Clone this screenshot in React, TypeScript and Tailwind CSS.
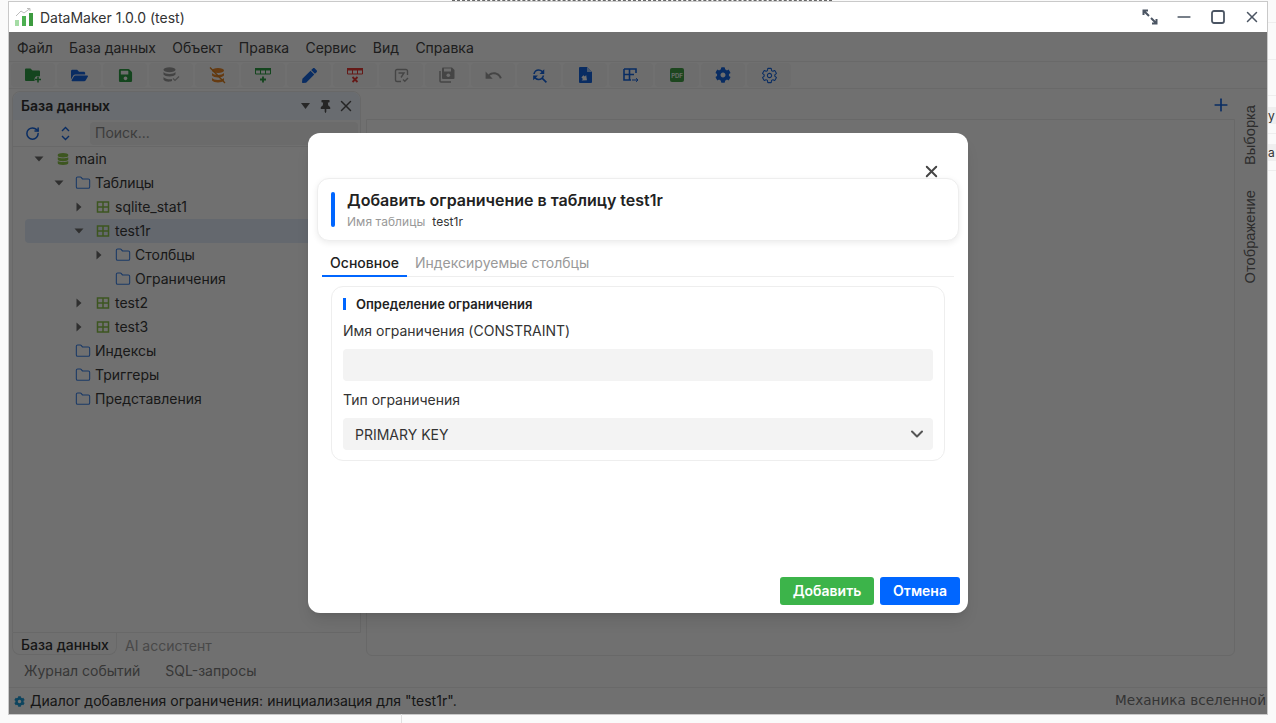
import type { ReactNode } from "react";
import { ChevronDown, Folder, Minus, Plus, RotateCw, X } from "lucide-react";
import { FaCog, FaDatabase, FaFolderOpen, FaPen, FaSave, FaThumbtack } from "react-icons/fa";
import { IoSettingsOutline } from "react-icons/io5";
import { MdFindReplace, MdUndo } from "react-icons/md";

function Logo() {
  return (
    <svg width="19" height="19" viewBox="0 0 19 19">
      <rect x="0" y="12" width="4" height="6" fill="#a5dca5" />
      <rect x="7" y="8" width="4" height="10" fill="#4caf50" />
      <rect x="14" y="5" width="4" height="13" fill="#3d9b40" />
      <path d="M1 8 L6 3 L9 5 L15 0.5 M12 0.5 H15 V3" fill="none" stroke="#bdbdbd" strokeWidth="1" />
    </svg>
  );
}

function ExpandIcon() {
  return (
    <svg width="16" height="16" viewBox="0 0 16 16" fill="none" stroke="#4b5563" strokeWidth="2">
      <path d="M1.5 6 V1.5 H6 M2 2 L7 7 M14.5 10 V14.5 H10 M14 14 L9 9" />
    </svg>
  );
}

function FolderPlusIcon() {
  return (
    <svg width="17" height="15" viewBox="0 0 17 15">
      <path d="M0 1.5 A1 1 0 0 1 1 .5 H5.5 L7.5 2.5 H14 A1 1 0 0 1 15 3.5 V12 A1 1 0 0 1 14 13 H1 A1 1 0 0 1 0 12 Z" fill="#2e9e44" />
      <circle cx="13" cy="11.5" r="3.5" fill="#f8f8f8" />
      <path d="M13 8.5 V14.5 M10 11.5 H16" stroke="#2e9e44" strokeWidth="1.6" />
    </svg>
  );
}

function DbCheckIcon() {
  return (
    <svg width="17" height="16" viewBox="0 0 17 16">
      <ellipse cx="6.5" cy="2.8" rx="6" ry="2.5" fill="#9a9a9a" />
      <path d="M.5 5 C2 7.5 11 7.5 12.5 5 V7.5 C11 10 2 10 .5 7.5 Z" fill="#9a9a9a" />
      <path d="M.5 10 C2 12.5 8 12.5 9 12 V14 C7 15 2 15 .5 12.8 Z" fill="#9a9a9a" />
      <path d="M10 11.5 L12 13.5 L16 9.5" fill="none" stroke="#a8a8a8" strokeWidth="1.2" />
    </svg>
  );
}

function DbOffIcon() {
  return (
    <svg width="17" height="17" viewBox="0 0 17 17">
      <ellipse cx="9" cy="3.5" rx="6" ry="2.5" fill="#e8872a" />
      <path d="M3 6 C5 8.5 13 8.5 15 6 V8.5 C13 11 5 11 3 8.5 Z" fill="#e8872a" />
      <path d="M3 11 C5 13.5 13 13.5 15 11 V13.5 C13 16 5 16 3 13.5 Z" fill="#e8872a" />
      <path d="M1 .5 L16 16" stroke="#d9801f" strokeWidth="1.3" />
    </svg>
  );
}

function TableEditIcon({ color, mark }: { color: string; mark: "plus" | "x" }) {
  return (
    <svg width="16" height="15" viewBox="0 0 16 15">
      <path d="M.5 1.5 H15.5 V6 H.5 Z" fill="none" stroke={color} strokeWidth="1" />
      <rect x="0" y="0" width="16" height="2.5" fill={color} />
      <path d="M5.5 1 V6 M10.5 1 V6" stroke={color} strokeWidth="1" />
      {mark === "plus" ? (
        <path d="M8 8.5 V14.5 M5 11.5 H11" stroke={color} strokeWidth="1.8" />
      ) : (
        <path d="M5.5 9 L10.5 14 M10.5 9 L5.5 14" stroke={color} strokeWidth="1.8" />
      )}
    </svg>
  );
}

function ClipCheckIcon() {
  return (
    <svg width="15" height="15" viewBox="0 0 15 15" fill="none" stroke="#9e9e9e" strokeWidth="1.4">
      <path d="M13.5 7 V3 A1.5 1.5 0 0 0 12 1.5 H3 A1.5 1.5 0 0 0 1.5 3 V12 A1.5 1.5 0 0 0 3 13.5 H7" />
      <path d="M4.5 5 H10 L7 9.5" />
      <path d="M9 11.5 L10.8 13.3 L14 10" />
    </svg>
  );
}

function SaveCopyIcon() {
  return (
    <svg width="16" height="16" viewBox="0 0 16 16">
      <path d="M1 4 V14 A1 1 0 0 0 2 15 H12" fill="none" stroke="#9e9e9e" strokeWidth="1.5" />
      <path d="M4 .5 H13 L15.5 3 V11 A1 1 0 0 1 14.5 12 H4 A1 1 0 0 1 3 11 V1.5 A1 1 0 0 1 4 .5 Z" fill="#9e9e9e" />
      <rect x="5" y="1.5" width="7" height="3" fill="#f8f8f8" />
      <circle cx="9.3" cy="8.2" r="1.8" fill="#f8f8f8" />
    </svg>
  );
}

function FileArrowIcon() {
  return (
    <svg width="13" height="16" viewBox="0 0 13 16">
      <path d="M1 0 H8 L13 5 V15 A1 1 0 0 1 12 16 H1 A1 1 0 0 1 0 15 V1 A1 1 0 0 1 1 0 Z" fill="#1565e0" />
      <path d="M8 0 V5 H13" fill="#a9c9f5" />
      <path d="M9 11.5 L5 8 V10 H3 V13 H5 V15 Z" fill="#fff" transform="rotate(40 6 11)" />
    </svg>
  );
}

function TableArrowIcon() {
  return (
    <svg width="16" height="15" viewBox="0 0 16 15" fill="none" stroke="#1565e0">
      <path d="M1 1 H13 V5 M1 1 V12 H8 M1 6.5 H11 M6.5 1 V12" strokeWidth="1.6" />
      <path d="M9 12 H15 M13 10.2 L15 12 L13 13.8" strokeWidth="1" />
    </svg>
  );
}

function PdfIcon() {
  return (
    <span className="flex h-[14px] w-[14px] items-center justify-center rounded-[2px] bg-[#43a047] text-[6px] font-bold text-[#e8f5e9]">
      PDF
    </span>
  );
}

const toolIcons: ReactNode[] = [
  <FolderPlusIcon />,
  <FaFolderOpen size={17} color="#1565e0" />,
  <FaSave size={15} color="#2e9e44" />,
  <DbCheckIcon />,
  <DbOffIcon />,
  <TableEditIcon color="#2e9e44" mark="plus" />,
  <FaPen size={15} color="#1565e0" />,
  <TableEditIcon color="#e53935" mark="x" />,
  <ClipCheckIcon />,
  <SaveCopyIcon />,
  <MdUndo size={19} color="#9e9e9e" />,
  <MdFindReplace size={19} color="#1565e0" />,
  <FileArrowIcon />,
  <TableArrowIcon />,
  <PdfIcon />,
  <FaCog size={16} color="#1565e0" />,
  <IoSettingsOutline size={17} color="#1565e0" />,
];

function Caret({ open }: { open: boolean }) {
  return (
    <svg width="10" height="10" viewBox="0 0 10 10" fill="#6b6b6b">
      {open ? <path d="M.5 2.5 H9.5 L5 7.5 Z" /> : <path d="M2.5 .5 L7.5 5 L2.5 9.5 Z" />}
    </svg>
  );
}

function TableIcon() {
  return (
    <svg width="14" height="14" viewBox="0 0 14 14" fill="none" stroke="#8bc34a" strokeWidth="1.5">
      <rect x="1.5" y="2" width="11" height="10" />
      <path d="M1.5 7 H12.5 M7 2 V12" />
    </svg>
  );
}

type TreeRow = { label: string; depth: number; kind: "db" | "folder" | "table"; caret?: "open" | "closed"; selected?: boolean };

const rows: TreeRow[] = [
  { label: "main", depth: 0, kind: "db", caret: "open" },
  { label: "Таблицы", depth: 1, kind: "folder", caret: "open" },
  { label: "sqlite_stat1", depth: 2, kind: "table", caret: "closed" },
  { label: "test1r", depth: 2, kind: "table", caret: "open", selected: true },
  { label: "Столбцы", depth: 3, kind: "folder", caret: "closed" },
  { label: "Ограничения", depth: 3, kind: "folder" },
  { label: "test2", depth: 2, kind: "table", caret: "closed" },
  { label: "test3", depth: 2, kind: "table", caret: "closed" },
  { label: "Индексы", depth: 1, kind: "folder" },
  { label: "Триггеры", depth: 1, kind: "folder" },
  { label: "Представления", depth: 1, kind: "folder" },
];

function Tree() {
  return (
    <div className="pl-[12px]">
      {rows.map((r) => (
        <div
          key={r.label}
          className={`flex h-6 items-center text-sm text-[#3a3a3a] ${r.selected ? "rounded-l bg-[#e3edfa]" : ""}`}
          style={{ paddingLeft: 6 + r.depth * 20 }}
        >
          <span className="flex w-4 justify-center">{r.caret && <Caret open={r.caret === "open"} />}</span>
          <span className="ml-2 flex w-4 justify-center">
            {r.kind === "db" && <FaDatabase size={12} color="#8bc34a" />}
            {r.kind === "folder" && <Folder size={16} color="#3b82e8" strokeWidth={1.6} />}
            {r.kind === "table" && <TableIcon />}
          </span>
          <span className="ml-1">{r.label}</span>
        </div>
      ))}
    </div>
  );
}

function DbPanel() {
  return (
    <div className="flex h-[542px] flex-col rounded-t-lg border border-[#ececec]">
      <div className="flex h-[28px] shrink-0 items-center rounded-t-lg bg-[#eef5ff] pl-2 pr-[5px]">
        <span className="flex-1 text-sm font-semibold text-[#333]">База данных</span>
        <svg width="9" height="6" viewBox="0 0 9 6" fill="#5a5a5a"><path d="M0 0 H9 L4.5 6 Z" /></svg>
        <FaThumbtack size={13} color="#555" className="ml-[9px]" />
        <X size={18} color="#555" className="ml-[5px]" strokeWidth={2} />
      </div>
      <div className="flex h-[27px] shrink-0 items-center border-b border-[#ececec] pr-[2px]">
        <RotateCw size={15} color="#1565e0" strokeWidth={2.4} className="ml-[12px]" />
        <svg width="9" height="15" viewBox="0 0 9 15" fill="none" stroke="#1565e0" strokeWidth="1.4" className="ml-[21px]">
          <path d="M1 5 L4.5 1.5 L8 5 M1 10 L4.5 13.5 L8 10" />
        </svg>
        <div className="ml-[20px] flex h-[23px] flex-1 items-center rounded bg-[#f3f3f3] pl-[5px] text-sm text-[#8a8a8a]">Поиск...</div>
      </div>
      <Tree />
    </div>
  );
}

function App() {
  return (
    <div className="relative h-[723px] w-[1276px] overflow-hidden bg-[#fafafa] font-['Inter',sans-serif]">
      {/* what shows of the page behind the window */}
      <div className="absolute left-[452px] top-0 w-[380px] border-t border-dashed border-[#666]" />
      <div className="absolute left-[1268px] top-0 flex h-[190px] w-2 flex-col">
        <div className="h-[23px] border-b border-[#eeeeee]" />
        <div className="h-[37px] border-b border-[#eeeeee]" />
        <div className="h-[36px] border-b border-[#eeeeee]" />
        <div className="mt-[11px] h-[17px] bg-[#efefef] text-xs leading-[17px] text-[#333]">у</div>
        <div className="mt-[9px] border-t border-[#eeeeee]" />
        <div className="mt-[10px] h-[17px] bg-[#efefef] text-xs leading-[17px] text-[#333]">а</div>
        <div className="mt-[9px] border-t border-[#eeeeee]" />
      </div>
      <div className="absolute bottom-0 left-[401px] h-[9px] border-l border-[#e0e0e0]" />

      <div className="ml-2 mt-px flex h-[714px] w-[1260px] flex-col border border-[#c9c9c9] bg-white">
        <div className="flex h-[30px] shrink-0 items-center pl-[6px] text-sm text-[#333]">
          <Logo />
          <span className="ml-[6px] flex-1 pt-px">DataMaker 1.0.0 (test)</span>
          <ExpandIcon />
          <Minus size={20} color="#4b5563" strokeWidth={2} className="ml-[16px]" />
          <svg width="14" height="14" viewBox="0 0 14 14" fill="none" stroke="#4b5563" strokeWidth="1.8" className="ml-[17px]">
            <rect x="1" y="1" width="12" height="12" rx="2" />
          </svg>
          <X size={18} color="#4b5563" strokeWidth={2} className="ml-[18px] mr-[6px]" />
        </div>

        <div className="relative flex min-h-0 flex-1 flex-col">
          <div className="flex h-[30px] shrink-0 items-center gap-[0.3px] border-b border-[#eeeeee] pt-[2px] text-sm text-[#444]">
            {["Файл", "База данных", "Объект", "Правка", "Сервис", "Вид", "Справка"].map((m) => (
              <span key={m} className="px-2">{m}</span>
            ))}
          </div>
          <div className="flex h-[27px] shrink-0 items-center gap-[2px] border-b border-[#eeeeee] pl-[2px]">
            {toolIcons.map((icon, i) => (
              <div key={i} className="flex h-[24px] w-[44px] items-center justify-center rounded-sm bg-[#f8f8f8]">{icon}</div>
            ))}
          </div>

          <div className="flex min-h-0 flex-1">
            <div className="ml-[3px] mt-[2px] flex w-[349px] shrink-0 flex-col">
              <DbPanel />
              <div className="flex h-[22px] items-center pt-[3px] text-sm">
                <div className="-mt-[3px] flex h-[22px] w-[105px] items-center rounded-b-lg border border-t-0 border-[#ececec] pl-2 pt-[3px] font-medium text-[#333]">База данных</div>
                <span className="ml-[8px] text-[#a5a5a5]">AI ассистент</span>
              </div>
              <div className="mt-[4px] flex h-[24px] items-center gap-[25px] pl-3 text-sm text-[#7d7d7d]">
                <span>Журнал событий</span>
                <span>SQL-запросы</span>
              </div>
            </div>
            <div className="ml-[5px] mt-[2px] flex w-[869px] shrink-0 flex-col">
              <div className="flex h-[28px] items-center justify-end pr-[4px]">
                <Plus size={20} color="#1565e0" strokeWidth={2} />
              </div>
              <div className="h-[537px] rounded-b-md border border-[#ececec]" />
            </div>
            <div className="flex flex-1 flex-col items-center pr-[2px] pt-[16px] font-['Liberation_Sans',sans-serif] text-[14.7px] text-[#666]">
              <span className="rotate-180 [writing-mode:vertical-rl]">Выборка</span>
              <span className="mt-[25px] rotate-180 [writing-mode:vertical-rl]">Отображение</span>
            </div>
          </div>

          <div className="flex h-[27px] shrink-0 items-center border-t border-[#eeeeee] pl-[5px] pr-px text-sm text-[#333]">
            <FaCog size={11} color="#1e9bd7" />
            <span className="ml-[5px] flex-1 tracking-[.03px]">Диалог добавления ограничения: инициализация для "test1r".</span>
            <span className="font-['DejaVu_Sans',sans-serif] text-[13.6px] text-[#777]">Механика вселенной</span>
          </div>

          <div className="absolute inset-0 bg-black/[.56]" />
        </div>
      </div>

      <div className="absolute left-[308px] top-[133px] flex h-[480px] w-[660px] flex-col rounded-xl bg-white px-[9px] pb-2 pt-[45px] shadow-lg">
        <X size={19} color="#444" strokeWidth={2.4} className="absolute right-[27px] top-[29px]" />
        <div className="relative flex h-[63px] shrink-0 items-center rounded-xl border border-[#eeeeee] bg-white pl-[13px] shadow-[0_2px_6px_rgba(0,0,0,0.08)]">
          <div className="h-[35px] w-1 rounded-sm bg-[#0066ff]" />
          <div className="ml-3">
            <div className="text-base font-semibold leading-5 text-[#222]">Добавить ограничение в таблицу test1r</div>
            <div className="mt-[4px] text-xs leading-4 tracking-[.05px]">
              <span className="text-[#999]">Имя таблицы</span>
              <span className="ml-[7px] text-[#333]">test1r</span>
            </div>
          </div>
        </div>

        <div className="ml-[5px] mr-[5px] mt-[13px] flex h-[23px] shrink-0 border-b border-[#eeeeee] text-sm">
          <div className="h-[23px] w-[85px] border-b-2 border-[#0066ff] text-center font-medium leading-[18px] text-[#222]">Основное</div>
          <div className="ml-2 leading-[18px] text-[#999]">Индексируемые столбцы</div>
        </div>

        <div className="ml-[14px] mr-[14px] mt-[9px] h-[175px] shrink-0 rounded-xl border border-[#eeeeee] px-3 text-sm text-[#333]">
          <div className="-ml-px mt-[11px] flex h-[12px] items-center">
            <div className="h-[12px] w-[3px] bg-[#0066ff]" />
            <span className="ml-[10px] text-[13px] font-semibold text-[#222]">Определение ограничения</span>
          </div>
          <div className="-ml-px mt-[11px] leading-5">Имя ограничения (CONSTRAINT)</div>
          <div className="-mx-px mt-2 h-[32px] rounded bg-[#f3f3f3]" />
          <div className="-ml-px mt-[9px] leading-5">Тип ограничения</div>
          <div className="-mx-px mt-2 flex h-[32px] items-center justify-between rounded bg-[#f3f3f3] pl-3 pr-[6px]">
            <span className="pt-[2px]">PRIMARY KEY</span>
            <ChevronDown size={20} color="#555" strokeWidth={2.4} />
          </div>
        </div>

        <div className="-mr-px mt-auto flex justify-end gap-[6px] text-sm font-semibold text-white">
          <button className="h-[28px] w-[94px] rounded-[3px] bg-[#3cb44a]">Добавить</button>
          <button className="h-[28px] w-[80px] rounded-[3px] bg-[#0066ff]">Отмена</button>
        </div>
      </div>
    </div>
  );
}

export default App;
